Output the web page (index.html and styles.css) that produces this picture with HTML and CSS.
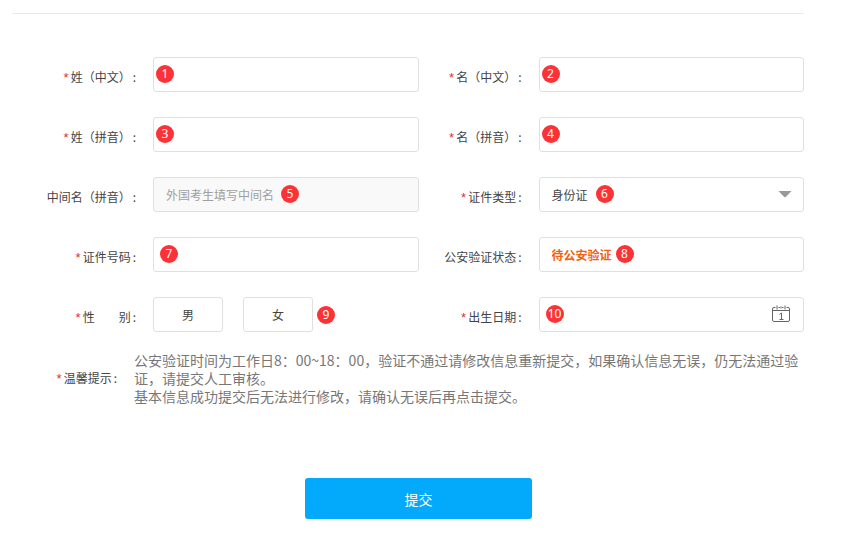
FILE: index.html
```html
<!DOCTYPE html>
<html lang="zh-CN">
<head>
<meta charset="utf-8">
<meta name="viewport" content="width=device-width, initial-scale=1">
<title>基本信息</title>
<link rel="stylesheet" href="styles.css">
</head>
<body>
<main class="page">
  <hr class="divider">
  <form class="form">
    <div class="grid">
      <div class="row">
        <label class="label" for="surname"><span class="req">*</span>姓（中文）<span class="colon">:</span></label>
        <div class="field"><input class="control" id="surname" type="text"><span class="badge at-start">1</span></div>
      </div>
      <div class="row">
        <label class="label" for="given"><span class="req">*</span>名（中文）<span class="colon">:</span></label>
        <div class="field"><input class="control" id="given" type="text"><span class="badge at-start">2</span></div>
      </div>
      <div class="row">
        <label class="label" for="surname-py"><span class="req">*</span>姓（拼音）<span class="colon">:</span></label>
        <div class="field"><input class="control" id="surname-py" type="text"><span class="badge at-start">3</span></div>
      </div>
      <div class="row">
        <label class="label" for="given-py"><span class="req">*</span>名（拼音）<span class="colon">:</span></label>
        <div class="field"><input class="control" id="given-py" type="text"><span class="badge at-start">4</span></div>
      </div>
      <div class="row">
        <label class="label" for="middle">中间名（拼音）<span class="colon">:</span></label>
        <div class="field"><input class="control" id="middle" type="text" placeholder="外国考生填写中间名" disabled><span class="badge after-hint">5</span></div>
      </div>
      <div class="row">
        <label class="label" for="id-type"><span class="req">*</span>证件类型<span class="colon">:</span></label>
        <div class="field">
          <select class="control" id="id-type"><option>身份证</option></select>
          <svg class="arrow" viewBox="0 0 14 8" aria-hidden="true"><path d="M0.500 1H13.500L8.300 6.500Q7 7.800 5.700 6.500Z" fill="#999"/></svg>
          <span class="badge after-type">6</span>
        </div>
      </div>
      <div class="row">
        <label class="label" for="id-no"><span class="req">*</span>证件号码<span class="colon">:</span></label>
        <div class="field"><input class="control" id="id-no" type="text"><span class="badge at-inset">7</span></div>
      </div>
      <div class="row">
        <label class="label" for="status">公安验证状态<span class="colon">:</span></label>
        <div class="field"><input class="control status" id="status" type="text" value="待公安验证" readonly><span class="badge after-status">8</span></div>
      </div>
      <div class="row" role="group" aria-labelledby="sex-label">
        <span class="label" id="sex-label"><span class="req">*</span>性　　别<span class="colon">:</span></span>
        <div class="choices">
          <button class="choice" type="button">男</button>
          <button class="choice" type="button">女</button>
          <span class="badge inline">9</span>
        </div>
      </div>
      <div class="row">
        <label class="label" for="birth"><span class="req">*</span>出生日期<span class="colon">:</span></label>
        <div class="field">
          <input class="control" id="birth" type="text">
          <svg class="calendar" viewBox="0 0 18 18" fill="none" stroke="#666" aria-hidden="true">
            <path d="M3.500 2.500H2Q0.500 2.500 0.500 4V15Q0.500 16.500 2 16.500H16Q17.500 16.500 17.500 15V4Q17.500 2.500 16 2.500H14.500M6.500 2.500H8M10 2.500H11.500M0.500 5.500H17.500M5 0.500V4.500M9 1.500V3.500M13 0.500V4.500"/>
            <path d="M7.500 9.500L9.500 8V14.500M7.500 14.500H11.500"/>
          </svg>
          <span class="badge at-inset">10</span>
        </div>
      </div>
    </div>
    <div class="tips">
      <span class="tips-label"><span class="req">*</span>温馨提示<span class="colon">:</span></span>
      <p class="tips-text">公安验证时间为工作日8：00~18：00，验证不通过请修改信息重新提交，如果确认信息无误，仍无法通过验证，请提交人工审核。<br>基本信息成功提交后无法进行修改，请确认无误后再点击提交。</p>
    </div>
    <button class="submit" type="submit">提交</button>
  </form>
</main>
</body>
</html>
```

FILE: styles.css
```css
* {
  box-sizing: border-box;
}

body {
  margin: 0;
  background: #fff;
  color: #444;
  font: 400 12px/20px "Noto Sans CJK SC", "Liberation Sans", sans-serif;
  text-spacing-trim: space-all;
}

.page {
  padding: 13px 41px 16px 12px;
}

.divider {
  height: 1px;
  margin: 0 0 43px;
  border: 0;
  background: #e9e9e9;
}

.form {
  padding-left: 21px;
}

.grid {
  display: grid;
  grid-template-columns: 1fr 1fr;
  row-gap: 25px;
}

.row {
  display: flex;
  gap: 17px;
}

.label {
  flex: 0 0 103px;
  padding-top: 10px;
  text-align: right;
  white-space: nowrap;
}

.req {
  margin-right: 2px;
  color: #e03030;
  font-family: "Liberation Sans", sans-serif;
  font-size: 13px;
}

.colon {
  margin-left: 2px;
}

.field {
  position: relative;
  flex: 1;
  min-width: 0;
}

.control {
  display: block;
  width: 100%;
  height: 35px;
  padding: 0 12px;
  border: 1px solid #e0e0e0;
  border-radius: 3px;
  background: #fff;
  color: #444;
  font: inherit;
  appearance: none;
}

.control:disabled {
  background: #f9f9f9;
}

.control::placeholder {
  color: #a0a0a0;
  opacity: 1;
}

.control.status {
  color: #f26010;
  font-weight: 700;
}

.badge {
  position: absolute;
  top: 8px;
  width: 18px;
  height: 18px;
  border-radius: 50%;
  background: #fb3236;
  color: #fff;
  font: 400 12px/17px "Noto Sans", sans-serif;
  text-align: center;
}

.badge.at-start {
  left: 3px;
}

.badge.at-inset {
  left: 7px;
}

.badge.after-hint {
  left: 128px;
}

.badge.after-type {
  left: 57px;
}

.badge.after-status {
  left: 77px;
}

.badge.inline {
  position: static;
  margin-left: -16px;
}

.arrow {
  position: absolute;
  top: 13px;
  right: 12px;
  width: 14px;
  height: 8px;
}

.calendar {
  position: absolute;
  top: 8px;
  right: 14px;
  width: 18px;
  height: 18px;
}

.choices {
  display: flex;
  align-items: center;
  gap: 20px;
}

.choice {
  width: 70px;
  height: 35px;
  padding: 0;
  border: 1px solid #e0e0e0;
  border-radius: 3px;
  background: #fff;
  color: #444;
  font: inherit;
}

.tips {
  display: flex;
  align-items: center;
  gap: 17px;
  margin-top: 19px;
}

.tips-label {
  flex: 0 0 84px;
  text-align: right;
}

.tips-text {
  flex: 1;
  margin: 0;
  color: #777;
  font-size: 14px;
  line-height: 18px;
}

.submit {
  display: block;
  width: 227px;
  height: 41px;
  margin: 73px auto 0;
  padding: 0;
  border: 0;
  border-radius: 3px;
  background: #03a9fa;
  color: #fff;
  font: inherit;
  font-size: 14px;
}
```
